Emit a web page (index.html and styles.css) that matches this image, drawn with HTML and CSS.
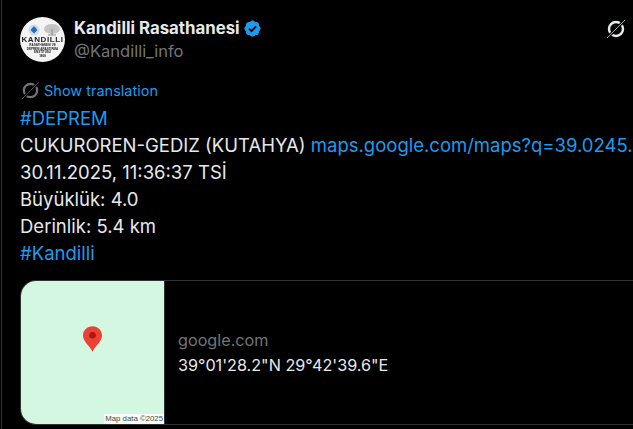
FILE: index.html
```html
<!DOCTYPE html>
<html lang="tr">
<head>
<meta charset="utf-8">
<title>Kandilli Rasathanesi</title>
<link rel="stylesheet" href="styles.css">
</head>
<body>
<article class="tweet">
  <header class="head">
    <div class="avatar">
      <svg class="av-icons" viewBox="0 0 36 13" width="36" height="13">
        <circle cx="9" cy="7" r="5.500" fill="#cfdcea"/>
        <path d="M9 3l3.500 4-3.500 3.500-3.500-3.500z" fill="#1f6fb5"/>
        <ellipse cx="27" cy="6" rx="8" ry="5" fill="#c4c4c4"/>
        <path d="M27 6v6M23 12h8" stroke="#8a8a8a"/>
      </svg>
      <span class="av-big">KANDILLI</span>
      <span class="av-small">RASATHANESI VE</span>
      <span class="av-small">DEPREM ARAŞTIRMA</span>
      <span class="av-small">ENSTİTÜSÜ</span>
      <span class="av-small">1868</span>
    </div>
    <div class="names">
      <div class="name-row">
        <span class="name">Kandilli Rasathanesi</span>
        <svg class="badge" viewBox="0 0 22 22" width="19" height="19">
          <path fill="#1d9bf0" d="M20.4 11c0-1.3-.8-2.5-2-3 .4-1.300.1-2.700-.8-3.600-.9-.9-2.300-1.200-3.600-.8-.5-1.200-1.700-2-3-2s-2.500.8-3 2c-1.300-.4-2.700-.1-3.600.8-.9.9-1.200 2.300-.8 3.600-1.200.5-2 1.700-2 3s.8 2.500 2 3c-.4 1.300-.1 2.700.8 3.600.9.9 2.300 1.200 3.600.8.5 1.200 1.700 2 3 2s2.500-.8 3-2c1.300.4 2.700.1 3.600-.8.9-.9 1.200-2.300.8-3.600 1.200-.5 2-1.700 2-3z"/>
          <path fill="none" stroke="#000" stroke-width="2.200" d="M7 11.200l2.900 2.900 5.200-5.600"/>
        </svg>
      </div>
      <div class="handle">@Kandilli_info</div>
    </div>
    <svg class="grok" viewBox="0 0 20 20" width="20" height="20">
      <circle cx="10" cy="10" r="7" fill="none" stroke="#e7e9ea" stroke-width="2.400"/>
      <path d="M1.500 18.500L18.500 1.500" stroke="#000" stroke-width="3"/>
      <path d="M1 19L19 1" stroke="#a9abad" stroke-width="1"/>
    </svg>
  </header>
  <div class="translate">
    <svg class="grok-small" viewBox="0 0 20 20" width="19" height="19">
      <circle cx="10" cy="10" r="7" fill="none" stroke="#71767b" stroke-width="2.400"/>
      <path d="M1.500 18.500L18.500 1.500" stroke="#000" stroke-width="3"/>
      <path d="M1 19L19 1" stroke="#54585c" stroke-width="1"/>
    </svg>
    <span class="link">Show translation</span>
  </div>
  <div class="body">
    <div class="link">#DEPREM</div>
    <div>CUKUROREN-GEDIZ (KUTAHYA) <span class="link">maps.google.com/maps?q=39.0245.</span></div>
    <div>30.11.2025, 11:36:37 TSİ</div>
    <div>Büyüklük: 4.0</div>
    <div>Derinlik: 5.4 km</div>
    <div class="link">#Kandilli</div>
  </div>
  <section class="card">
    <div class="map">
      <svg class="pin" viewBox="0 0 20 28" width="19" height="27">
        <path fill="#ea4335" d="M10 0C4.500 0 0 4.300 0 9.700 0 16.500 7 20 10 27c3-7 10-10.500 10-17.300C20 4.300 15.500 0 10 0z"/>
        <circle cx="10" cy="9.500" r="3.500" fill="#b31412"/>
      </svg>
      <span class="attr">Map data ©2025</span>
    </div>
    <div class="info">
      <div class="domain">google.com</div>
      <div class="coords">39°01'28.2"N 29°42'39.6"E</div>
    </div>
  </section>
</article>
</body>
</html>
```

FILE: styles.css
```css
html, body {
  margin: 0;
  height: 100%;
  background: #000;
  overflow: hidden;
}
.tweet {
  box-sizing: border-box;
  width: 632px;
  height: 429px;
  margin-left: 1px;
  border-left: 1px solid #2f3336;
  padding: 17px 0 0 18px;
  color: #e7e9ea;
  font-family: Inter, "Noto Sans", sans-serif;
  overflow: hidden;
}
.head {
  display: flex;
  width: 606px;
  height: 45px;
}
.avatar {
  flex: none;
  width: 45px;
  height: 45px;
  border-radius: 50%;
  background: #f4f4f4;
  color: #222;
  display: flex;
  flex-direction: column;
  align-items: center;
  font-family: "Liberation Sans", sans-serif;
  line-height: 1;
  overflow: hidden;
  filter: blur(.3px);
}
.av-icons { flex: none; margin-top: 6px; }
.av-big { font-size: 8px; font-weight: 700; letter-spacing: .6px; }
.av-small { font-size: 3px; font-weight: 700; line-height: 3.500px; white-space: nowrap; }
.names {
  margin-left: 9px;
  flex: 1;
}
.name-row {
  display: flex;
  align-items: center;
  gap: 3px;
  height: 22px;
  margin-bottom: 2px;
}
.name {
  font-size: 16.800px;
  font-weight: 700;
}
.handle {
  font-size: 16.500px;
  color: #71767b;
  line-height: 21px;
}
.grok { margin-top: 2px; }
.translate {
  display: flex;
  align-items: center;
  gap: 4px;
  margin: 18px 0 0 1px;
  height: 20px;
  font-size: 14.500px;
}
.link { color: #1d9bf0; }
.body {
  font-size: 18.500px;
  line-height: 27px;
  white-space: nowrap;
  padding-top: 5px;
}
.card {
  display: flex;
  margin-top: 13px;
  height: 143px;
  border: 1px solid #2f3336;
  border-right: 0;
  border-radius: 16px 0 0 16px;
  overflow: hidden;
}
.map {
  position: relative;
  width: 144px;
  background: #d4f7e2;
  display: flex;
  justify-content: center;
  padding-top: 45px;
  box-sizing: border-box;
  border-right: 1px solid #2f3336;
}
.pin { display: block; }
.attr {
  position: absolute;
  right: 0;
  bottom: 0;
  background: rgba(255,255,255,.85);
  color: #444;
  font: 7.800px/10px "Liberation Sans", sans-serif;
  padding: 0 1px;
}
.info {
  padding-left: 13px;
  display: flex;
  flex-direction: column;
  justify-content: center;
  font-size: 16.200px;
  line-height: 24px;
}
.domain { color: #71767b; margin-bottom: 1px; }
.coords { color: #e7e9ea; }
```
